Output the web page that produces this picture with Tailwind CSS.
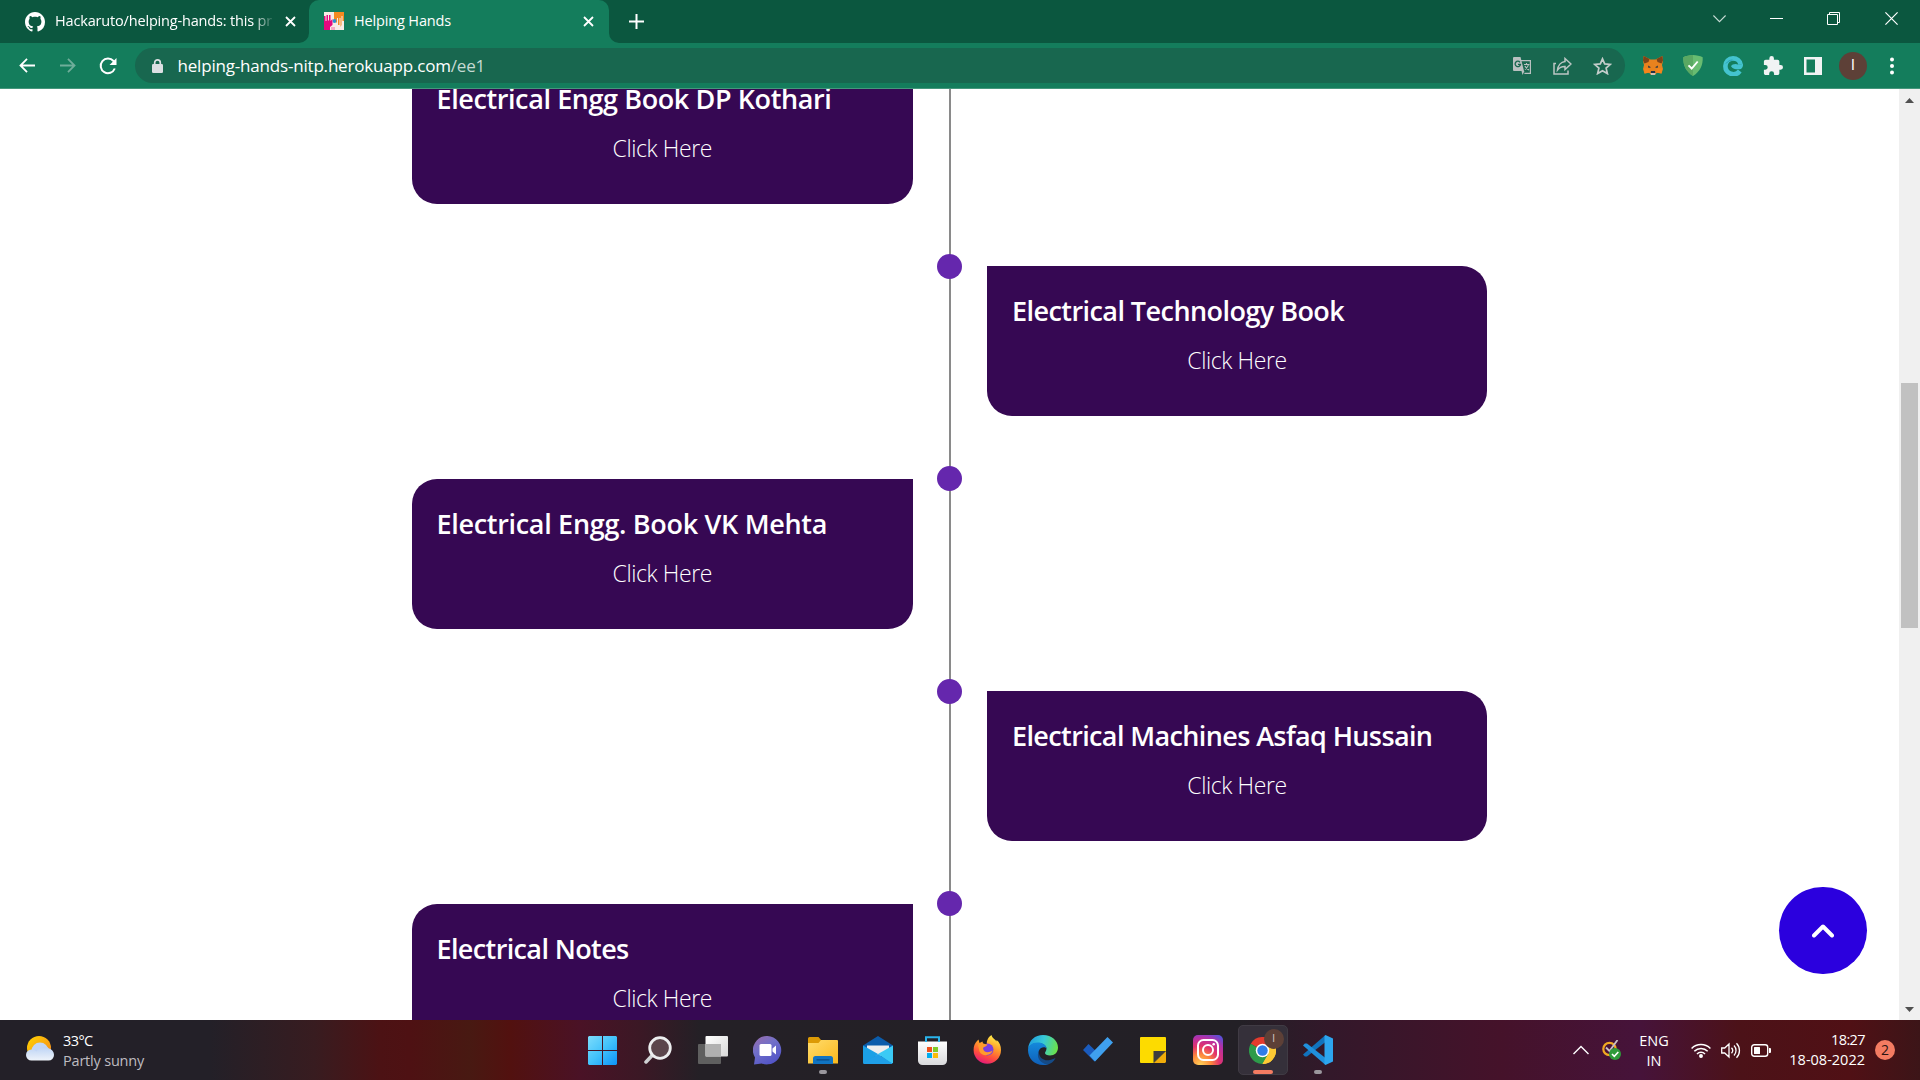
<!DOCTYPE html>
<html lang="en">
<head>
<meta charset="utf-8">
<title>Helping Hands</title>
<script src="https://cdn.jsdelivr.net/npm/@tailwindcss/browser@4"></script>
</head>
<body class="w-[1920px] h-[1080px] overflow-hidden flex flex-col bg-white font-['Open_Sans',sans-serif]">

<!-- Tab strip -->
<header class="flex h-[43px] shrink-0 bg-[#0b573f] text-white text-[14.5px]">
  <div class="flex items-center w-[309px] shrink-0 pl-[25px] pr-[12px] rounded-br-[10px]">
    <svg class="w-5 h-5 shrink-0" viewBox="0 0 16 16" fill="#fff"><path d="M8 0C3.58 0 0 3.58 0 8c0 3.54 2.29 6.53 5.47 7.59.4.07.55-.17.55-.38 0-.19-.01-.82-.01-1.49-2.01.37-2.53-.49-2.69-.94-.09-.23-.48-.94-.82-1.13-.28-.15-.68-.52-.01-.53.63-.01 1.08.58 1.23.82.72 1.21 1.87.87 2.33.66.07-.52.28-.87.51-1.07-1.78-.2-3.64-.89-3.64-3.95 0-.87.31-1.59.82-2.15-.08-.2-.36-1.02.08-2.12 0 0 .67-.21 2.2.82.64-.18 1.32-.27 2-.27s1.36.09 2 .27c1.53-1.04 2.2-.82 2.2-.82.44 1.1.16 1.92.08 2.12.51.56.82 1.27.82 2.15 0 3.07-1.87 3.75-3.65 3.95.29.25.54.73.54 1.48 0 1.07-.01 1.93-.01 2.2 0 .21.15.46.55.38A8.01 8.01 0 0 0 16 8c0-4.42-3.58-8-8-8z"/></svg>
    <div class="ml-[10px] w-[219px] overflow-hidden whitespace-nowrap tracking-[-0.17px] leading-5 -mt-[1px] [mask-image:linear-gradient(to_right,#000_198px,transparent_220px)]">Hackaruto/helping-hands: this pr</div>
    <svg class="ml-auto mr-[1px] w-[11px] h-[11px]" viewBox="0 0 11 11" stroke="#fff" stroke-width="1.8"><path d="M1 1l9 9M10 1l-9 9"/></svg>
  </div>
  <div class="relative flex items-center w-[300px] shrink-0 pl-[15px] pr-[15px] rounded-t-[10px] bg-[#147d5c]">
    <svg class="absolute -left-[10px] bottom-0 w-[10px] h-[10px]" viewBox="0 0 10 10" fill="#147d5c"><path d="M10 0v10H0A10 10 0 0 0 10 0z"/></svg>
    <svg class="absolute -right-[10px] bottom-0 w-[10px] h-[10px]" viewBox="0 0 10 10" fill="#147d5c"><path d="M0 0v10h10A10 10 0 0 1 0 0z"/></svg>
    <svg class="w-5 h-[18px] -mt-[2px]" viewBox="0 0 20 18"><path fill="#f8ece6" d="M0 0h20v18H0z"/><path fill="#f58a1f" d="M10 0h10v9h-1.500V4h-1v9l-1 2V6h-1v7h-1.500V6h-1v5L10 8z"/><path fill="#e5097f" d="M0 4h1.500v5h1V3H4v5.500h1V3h1.500v6l2-2v6L6 15v3H0z"/><circle cx="10.500" cy="9" r="1.900" fill="#2f8fd0"/><path fill="#f4a9c4" d="M7 15h4v3H7z"/></svg>
    <span class="ml-[10px] tracking-[-0.15px] leading-5 -mt-[1px]">Helping Hands</span>
    <svg class="ml-auto w-[11px] h-[11px]" viewBox="0 0 11 11" stroke="#fff" stroke-width="1.8"><path d="M1 1l9 9M10 1l-9 9"/></svg>
  </div>
  <svg class="ml-[19.5px] mt-[14px] w-[15px] h-[15px]" viewBox="0 0 15 15" stroke="#fff" stroke-width="2"><path d="M7.500 0v15M0 7.500h15"/></svg>
  <div class="ml-auto flex pt-3 pr-[22px]">
    <svg class="w-[13px] h-[13px]" viewBox="0 0 13 13" fill="none" stroke="#c8dcd5" stroke-width="1.100"><path d="M.4 3.500l6.100 6.100 6.100-6.100"/></svg>
    <svg class="ml-11 w-[13px] h-[13px]" viewBox="0 0 13 13" stroke="#fff"><path d="M0 6.500h13"/></svg>
    <svg class="ml-11 w-[13px] h-[13px]" viewBox="0 0 13 13" fill="none" stroke="#fff"><path d="M.5 2.500h10v10H.5zM2.500 2.500v-2h10v10h-2"/></svg>
    <svg class="ml-[45px] w-[13px] h-[13px]" viewBox="0 0 13 13" stroke="#fff" stroke-width="1.200"><path d="M.4.4l12.200 12.200M12.600.4L.4 12.600"/></svg>
  </div>
</header>

<!-- Toolbar -->
<nav class="flex items-center h-[46px] shrink-0 bg-[#147d5c] border-b border-[#45977c] pl-[19px]">
  <svg class="w-[17px] h-[15px]" viewBox="0 0 18 16" fill="none" stroke="#fff" stroke-width="1.900"><path d="M17 8H2M8.500 1L1.500 8l7 7"/></svg>
  <svg class="ml-[23px] w-[17px] h-[15px]" viewBox="0 0 18 16" fill="none" stroke="#6fae9a" stroke-width="1.900"><path d="M1 8h15M9.500 1l7 7-7 7"/></svg>
  <svg class="ml-[23px] w-[18px] h-[18px]" viewBox="0 0 18 18" fill="none" stroke="#fff" stroke-width="2"><path d="M15.800 11.500A7.300 7.300 0 1 1 14.500 4l1.500 1.700"/><path d="M17.500 1v7h-7z" fill="#fff" stroke="none"/></svg>
  <div class="ml-[18px] flex items-center w-[1490px] h-[35px] rounded-full bg-[#18674f] pl-[17px] pr-[13px]">
    <svg class="w-[11px] h-[14px] mt-[1px]" viewBox="0 0 11 14"><path d="M2.700 6V3.700a2.800 2.800 0 0 1 5.600 0V6" fill="none" stroke="#dcdfe3" stroke-width="1.700"/><rect y="5" width="11" height="9" rx="1.300" fill="#dcdfe3"/></svg>
    <span class="ml-[14.5px] text-[17px] leading-6 tracking-[-0.19px] text-white">helping-hands-nitp.herokuapp.com<span class="text-[#c5dad3]">/ee1</span></span>
    <svg class="ml-auto w-[19px] h-[18px]" viewBox="0 0 19 18"><path d="M8 3.600h9.400v12.800h-6" fill="none" stroke="#b9c0c0" stroke-width="1.200"/><path d="M1 0h6.500l3.500 14H1a1 1 0 0 1-1-1V1a1 1 0 0 1 1-1z" fill="#b9c0c0"/><path d="M8.500 14h3L9.500 18z" fill="#b9c0c0"/><path d="M7 5.300A2.700 2.700 0 1 0 7.500 7.400H5" fill="none" stroke="#18674f" stroke-width="1.300"/><path d="M11 7.500h5.500M13.500 6v1.500M15.500 7.500c-.5 2.500-2 4-3.500 5M12 9c.8 1.800 2 3 4 4" fill="none" stroke="#b9c0c0" stroke-width="1.100"/></svg>
    <svg class="ml-[21px] w-[19px] h-[18px]" viewBox="0 0 19 18" fill="none" stroke="#bcc6c4" stroke-width="1.500"><path d="M3 6.500H1V17h14v-3.500"/><path d="M12 1.500L18 7l-6 5.500V9.500C8.500 9.300 6.500 10.500 4.500 13 5 8.500 8 5 12 4.500z"/></svg>
    <svg class="ml-[21px] w-[19px] h-[18px]" viewBox="0 0 19 18" fill="none" stroke="#c3cdca" stroke-width="1.700"><path d="M9.500 1.800l2.200 5.100 5.600.5-4.200 3.700 1.300 5.500-4.900-2.900-4.900 2.900 1.300-5.500-4.200-3.700 5.600-.5z"/></svg>
  </div>
  <svg class="ml-[17.5px] w-5 h-[19px]" viewBox="0 0 20 19"><path fill="#e8821e" d="M.6 0L7.500 3.500h5L19.400 0 20 5l-1 4 1 4-1.500 4.500L14 16.500 12 19H8l-2-2.500-4.500 1L0 13l1-4-1-4z"/><path fill="#7d4319" d="M.6 0L6.500 3 5.500 6 1.500 7.500 0 4.500zM19.400 0l-5.900 3 1 3 4 1.500L20 4.500z"/><path fill="#f6851b" d="M1 12.500h5l1.500 4-6 1zM19 12.500h-5l-1.500 4 6 1z"/><path fill="#233447" d="M5 9.500l3 1.700-2.500.8zM15 9.500l-3 1.700 2.500.8zM8 15h4l.3 2H7.700z"/><path fill="#d5bfb2" d="M7.500 17h5L12 19H8z"/></svg>
  <svg class="ml-5 w-5 h-[21px]" viewBox="0 0 20 21"><path fill="#68bc71" d="M10 0c3.500.1 7 .9 9.700 2.200C20 10 17.500 16 10 21 2.500 16 0 10 .3 2.200 3 .9 6.500.1 10 0z"/><path fill="#5aa863" d="M10 0v21C2.500 16 0 10 .3 2.200 3 .9 6.500.1 10 0z"/><path d="M5.500 10.300l3.200 3.200 6-7" fill="none" stroke="#fff" stroke-width="1.900"/></svg>
  <svg class="ml-[20.5px] w-5 h-5" viewBox="0 0 20 20"><path fill="none" stroke="#44c3cf" stroke-width="4.600" d="M16.800 15A8 8 0 0 1 2.400 10C2.400 6 5.500 2.400 10 2.400c4 0 7 2.600 7.500 6"/><path fill="#44c3cf" d="M8 10.300c1-2.500 5-3 7-1.800L20 8c.2 3-1 5-3.500 5.300-3 .3-7-.3-8.500-3z"/><path d="M3 7.500c1.500-2 4-3.500 6.500-3.500" fill="none" stroke="#2a9fae" stroke-width="1"/></svg>
  <svg class="ml-[20px] w-5 h-5" viewBox="1 1 22 22" fill="#f1f3f4"><path d="M20.500 11H19V7c0-1.100-.9-2-2-2h-4V3.500a2.500 2.500 0 0 0-5 0V5H4c-1.100 0-2 .9-2 2v3.800h1.500a2.700 2.700 0 0 1 0 5.400H2V20c0 1.100.9 2 2 2h3.800v-1.500a2.700 2.700 0 0 1 5.400 0V22H17c1.100 0 2-.9 2-2v-4h1.500a2.500 2.500 0 0 0 0-5z"/></svg>
  <svg class="ml-[20.5px] w-[18px] h-[18px]" viewBox="0 0 18 18"><path fill="#f1f3f4" d="M0 0h18v18H0z"/><path fill="#147d5c" d="M2.500 2.500h8.500v13H2.500z"/></svg>
  <div class="ml-[17.5px] w-7 h-7 rounded-full bg-[#5d4037] text-white text-[14px] flex items-center justify-center font-['Roboto']">I</div>
  <svg class="ml-[23px] w-1 h-[18px]" viewBox="0 0 4 18" fill="#fff"><circle cx="2" cy="2.500" r="2"/><circle cx="2" cy="9" r="2"/><circle cx="2" cy="15.500" r="2"/></svg>
</nav>

<div class="flex h-[931px] shrink-0">
  <main class="relative w-[1899px] overflow-hidden">
    <div class="absolute left-[949px] top-0 w-[2px] h-full bg-[#8a8a8a]"></div>
    <div class="ml-[412px] -mt-[35px] w-[1075px] flex flex-col gap-[62.400px] text-white">
      <section class="relative self-start w-[500.500px] h-[150px] pt-[27px] px-[24.500px] rounded-[25px] rounded-tr-none bg-[#360853]">
        <h2 class="text-[27px] leading-9 font-semibold tracking-[-0.4px] whitespace-nowrap">Electrical Engg Book DP Kothari</h2>
        <p class="mt-[16px] text-center text-[23px] leading-[30px] font-light tracking-[-0.4px]">Click Here</p>
      </section>
      <section class="relative self-end w-[500px] h-[150px] pt-[27px] px-[25px] rounded-[25px] rounded-tl-none bg-[#360853]">
        <i class="absolute -left-[50px] -top-[12.500px] w-[25px] h-[25px] rounded-full bg-[#6527ad]"></i>
        <h2 class="text-[27px] leading-9 font-semibold tracking-[-0.56px] whitespace-nowrap">Electrical Technology Book</h2>
        <p class="mt-[16px] text-center text-[23px] leading-[30px] font-light tracking-[-0.4px]">Click Here</p>
      </section>
      <section class="relative self-start w-[500.500px] h-[150px] pt-[27px] px-[24.500px] rounded-[25px] rounded-tr-none bg-[#360853]">
        <i class="absolute left-[525px] -top-[12.500px] w-[25px] h-[25px] rounded-full bg-[#6527ad]"></i>
        <h2 class="text-[27px] leading-9 font-semibold tracking-[-0.31px] whitespace-nowrap">Electrical Engg. Book VK Mehta</h2>
        <p class="mt-[16px] text-center text-[23px] leading-[30px] font-light tracking-[-0.4px]">Click Here</p>
      </section>
      <section class="relative self-end w-[500px] h-[150px] pt-[27px] px-[25px] rounded-[25px] rounded-tl-none bg-[#360853]">
        <i class="absolute -left-[50px] -top-[12.500px] w-[25px] h-[25px] rounded-full bg-[#6527ad]"></i>
        <h2 class="text-[27px] leading-9 font-semibold tracking-[-0.62px] whitespace-nowrap">Electrical Machines Asfaq Hussain</h2>
        <p class="mt-[16px] text-center text-[23px] leading-[30px] font-light tracking-[-0.4px]">Click Here</p>
      </section>
      <section class="relative self-start w-[500.500px] h-[150px] pt-[27px] px-[24.500px] rounded-[25px] rounded-tr-none bg-[#360853]">
        <i class="absolute left-[525px] -top-[12.500px] w-[25px] h-[25px] rounded-full bg-[#6527ad]"></i>
        <h2 class="text-[27px] leading-9 font-semibold tracking-[-0.62px] whitespace-nowrap">Electrical Notes</h2>
        <p class="mt-[16px] text-center text-[23px] leading-[30px] font-light tracking-[-0.4px]">Click Here</p>
      </section>
    </div>
    <button class="absolute left-[1779px] top-[798px] w-[88px] h-[87px] rounded-full bg-[#2b00de] flex items-center justify-center">
      <svg class="w-[22px] h-[14px]" viewBox="0 0 22 14" fill="none" stroke="#fff" stroke-width="4" stroke-linecap="round" stroke-linejoin="round"><path d="M2 11.500l9-9 9 9"/></svg>
    </button>
  </main>
  <aside class="w-[21px] bg-[#f0f0f0] flex flex-col items-center">
    <svg class="mt-[9px] -ml-px w-[9px] h-[5px]" viewBox="0 0 9 5" fill="#505050"><path d="M4.500 0L9 5H0z"/></svg>
    <div class="mt-[280px] -ml-px w-[17px] h-[245px] bg-[#c1c1c1]"></div>
    <svg class="mt-auto mb-[8px] -ml-px w-[9px] h-[5px]" viewBox="0 0 9 5" fill="#505050"><path d="M4.500 5L9 0H0z"/></svg>
  </aside>
</div>

<!-- Taskbar -->
<footer class="flex items-center h-[60px] shrink-0 text-white text-[14.500px] leading-5 bg-[linear-gradient(90deg,#232028_0px,#232028_210px,#381c20_315px,#4c1214_380px,#4e1113_410px,#481912_470px,#52110f_510px,#4a1226_580px,#3b1825_640px,#242026_700px,#232026_1240px,#33182a_1330px,#45122a_1500px,#46133a_1640px,#4c1218_1740px,#501015_1850px,#3c1518_1920px)]">
  <div class="flex items-center w-[575px] shrink-0 pl-[26px]">
    <svg class="w-7 h-[25px] -mt-[3px]" viewBox="0 0 28 25"><defs><linearGradient id="sun" x1="0" y1="0" x2="1" y2="1"><stop stop-color="#ffd500"/><stop offset="1" stop-color="#f58220"/></linearGradient><linearGradient id="cl" x1="0" y1="0" x2="0" y2="1"><stop stop-color="#bcd3f5"/><stop offset="1" stop-color="#eef3fa"/></linearGradient></defs><circle cx="13" cy="12" r="12" fill="url(#sun)"/><circle cx="14" cy="15" r="8.500" fill="#c2d6f6"/><path d="M5.500 24.500a5.500 5.500 0 0 1 0-11c2 0 3 .3 5 2 2-3 8-7 12.500-3 4 1.500 5 4 5 6.500a5.500 5.500 0 0 1-5.500 5.500z" fill="url(#cl)"/></svg>
    <div class="ml-[9px] mt-[1px]"><p class="tracking-[-0.6px]">33°C</p><p class="text-[#bfbcc1] tracking-[-0.2px]">Partly sunny</p></div>
  </div>
  <div class="flex items-center shrink-0">
    <div class="w-[55px] flex justify-center"><svg class="w-[29px] h-[29px]" viewBox="0 0 29 29"><defs><linearGradient id="win" gradientUnits="userSpaceOnUse" x1="0" y1="0" x2="29" y2="29"><stop stop-color="#7ddcfb"/><stop offset=".5" stop-color="#42c2fb"/><stop offset="1" stop-color="#0d93f8"/></linearGradient></defs><path fill="url(#win)" d="M1 0h13v14H0V1zM15 0h13l1 1v13H15zM0 15h14v14H1l-1-1zM15 15h14v13l-1 1H15z"/></svg></div>
    <div class="w-[55px] flex justify-center"><svg class="w-7 h-7" viewBox="0 0 28 28"><path d="M2 26l7.500-8" stroke="#cfd1d3" stroke-width="3.500" stroke-linecap="round"/><circle cx="16" cy="12" r="10.300" fill="#5b464c" stroke="#eceeef" stroke-width="2.800"/></svg></div>
    <div class="w-[55px] flex justify-center"><svg class="w-[30px] h-7" viewBox="0 0 30 28"><defs><linearGradient id="tv" x1="0" y1="0" x2="1" y2="1"><stop stop-color="#fff"/><stop offset="1" stop-color="#d8d8d8"/></linearGradient></defs><rect y="8" width="23" height="20" rx="1" fill="#5f5f5f"/><rect x="7.500" width="22.500" height="20.500" rx="1" fill="url(#tv)"/><path d="M7.500 8H23v12.500H7.500z" fill="#b0b0b0"/></svg></div>
    <div class="w-[55px] flex justify-center"><svg class="w-[29px] h-[29px]" viewBox="0 0 29 29"><defs><linearGradient id="ch" x1="0" y1="0" x2=".6" y2="1"><stop stop-color="#9b6aa8"/><stop offset=".45" stop-color="#7270c8"/><stop offset="1" stop-color="#5355c8"/></linearGradient></defs><path fill="url(#ch)" d="M14.500 0a14.200 14.200 0 1 1-5.700 27.400L1 28.500l1-7A14.200 14.200 0 0 1 14.500 0z"/><rect x="6.500" y="8" width="12" height="12" rx="1.500" fill="#fff"/><path d="M19.500 12.500L23 9.500v9l-3.500-3z" fill="#fff"/></svg></div>
    <div class="relative w-[55px] flex justify-center"><svg class="w-[30px] h-[27px]" viewBox="0 0 30 27"><defs><linearGradient id="fo" x1="0" y1="0" x2="1" y2="1"><stop stop-color="#ffdc6c"/><stop offset="1" stop-color="#fbb91d"/></linearGradient></defs><path fill="#dc9a06" d="M0 1.500A1.500 1.500 0 0 1 1.500 0h9L13 3v4H0z"/><path fill="url(#fo)" d="M0 6h10.500L13 3h16a1 1 0 0 1 1 1v22.500H0z"/><path fill="#1174c2" d="M5 21.500a2.500 2.500 0 0 1 2.500-2.500h15a2.500 2.500 0 0 1 2.500 2.500V27H5z"/><path d="M9 22.800h12" stroke="#0a4a86" stroke-width="1.300" stroke-linecap="round"/></svg><span class="absolute left-[24px] top-[33px] w-2 h-1 rounded-full bg-[#9a979d]"></span></div>
    <div class="w-[55px] flex justify-center"><svg class="w-[30px] h-7" viewBox="0 0 30 28"><path fill="#0b5cab" d="M15 0l15 9.500v4H0v-4z"/><path fill="#eeeeee" d="M4 9.500h22V14l-11 8L4 14z"/><path fill="#1ba0e6" d="M0 9.500L15 18l-12 10H1.500A1.500 1.500 0 0 1 0 26.500z"/><path fill="#3bcaf5" d="M30 9.500v17l-1.500 1.500L15 18z"/><path fill="#1f9fe8" d="M15 18l14.500 9.500-1 .5H1.500l-1-.5z"/></svg></div>
    <div class="w-[55px] flex justify-center"><svg class="w-[29px] h-[29px]" viewBox="0 0 29 29"><defs><linearGradient id="st" x1="0" y1="0" x2="0" y2="1"><stop stop-color="#fff"/><stop offset="1" stop-color="#d9d9dc"/></linearGradient></defs><path fill="url(#st)" d="M0 5.500h29v19A4.500 4.500 0 0 1 24.500 29h-20A4.500 4.500 0 0 1 0 24.500z"/><path d="M8 6V1.300h13V6" fill="none" stroke="#2ab4ec" stroke-width="2"/><path fill="#f1511b" d="M9 11h5v5H9z"/><path fill="#80cc28" d="M15 11h5v5h-5z"/><path fill="#00adef" d="M9 17h5v5H9z"/><path fill="#fbbc09" d="M15 17h5v5h-5z"/></svg></div>
    <div class="w-[55px] flex justify-center"><svg class="w-[29px] h-[29px] -mt-px" viewBox="0 0 29 29"><defs><linearGradient id="ff" x1=".7" y1="0" x2=".3" y2="1"><stop stop-color="#fff04a"/><stop offset=".4" stop-color="#ff9a2a"/><stop offset=".7" stop-color="#ff4f3d"/><stop offset="1" stop-color="#e3157e"/></linearGradient></defs><path fill="url(#ff)" d="M5.500 4.500l1 3.500 3-1.500.5 2 4 1c-1-4 2-8 4.500-9.500C19 3 22 4 23.500 6.500V5c3 2 4.500 6 4.500 10a13.700 13.700 0 1 1-27.400 0C.5 11 2 8 4 6z"/><circle cx="14.500" cy="14.500" r="6" fill="#7a3fe0"/><path fill="#ff9b2c" d="M5 10c3-3 6-1 9.500-.5-1 2-3 2-4.500 3.500.5 5 6 5 9.500 2.500-1 5-10 7-13 1z"/></svg></div>
    <div class="w-[55px] flex justify-center"><svg class="w-[30px] h-[30px]" viewBox="0 0 30 30"><defs><linearGradient id="ed" x1="0" y1=".3" x2="1" y2=".5"><stop stop-color="#1f9de0"/><stop offset=".5" stop-color="#38c9d6"/><stop offset="1" stop-color="#6be04a"/></linearGradient><linearGradient id="ee" x1="0" y1="0" x2="0" y2="1"><stop stop-color="#1489dc"/><stop offset="1" stop-color="#0f5fb8"/></linearGradient></defs><path fill="url(#ed)" d="M0 14C1 5 7 0 15 0c9 0 15 6 15 12.500 0 5-3.500 8-8 8-3 0-5-1-5-2.500 0-1 1.500-2 1.500-4.500C18.500 11 15 8 10 8 5 8 1 11 0 14z"/><path fill="url(#ee)" d="M0 15c0-4 4-7.500 9.500-7.500 5 0 9 2.500 9 6-1.500-2-6-1.500-7.500 2-2 5 2 12 9 14.200-1.500.3-3 .3-5 .3C6.500 30 0 23.500 0 15z"/><path fill="#154a86" d="M11 15.500c-1 7 5 11 11 9.500 2.500-.5 4-1.500 5.500-2C26 26.500 22.500 29 19.500 29.700 11 28 8 21 11 15.500z"/></svg></div>
    <div class="w-[55px] flex justify-center"><svg class="w-[30px] h-[25px] -mt-px" viewBox="0 0 30 25"><path fill="#1a5bbd" d="M5.500 7L0 13l11.500 11.500 6-6z"/><path fill="#3fa0ee" d="M24.500 0L30 5.500 12 24.500l-5.500-6z"/></svg></div>
    <div class="w-[55px] flex justify-center"><svg class="w-[26px] h-[26px]" viewBox="0 0 26 26"><path fill="#fddb00" d="M0 1a1 1 0 0 1 1-1h24a1 1 0 0 1 1 1v13L14 26H1a1 1 0 0 1-1-1z"/><path fill="#f0ac0a" d="M26 14v11l-1 1H14z"/><path fill="#3d3d3d" d="M13.500 14H26L13.500 26z"/></svg></div>
    <div class="w-[55px] flex justify-center"><svg class="w-[30px] h-[30px]" viewBox="0 0 30 30"><defs><radialGradient id="ig" cx=".25" cy="1" r="1.150"><stop stop-color="#ffd25a"/><stop offset=".3" stop-color="#fd8a3a"/><stop offset=".55" stop-color="#e2336b"/><stop offset=".8" stop-color="#b530a8"/><stop offset="1" stop-color="#5b4fd6"/></radialGradient></defs><rect width="30" height="30" rx="5" fill="url(#ig)"/><rect x="5" y="5" width="20" height="20" rx="5.500" fill="none" stroke="#fff" stroke-width="2"/><circle cx="15" cy="15" r="5" fill="none" stroke="#fff" stroke-width="2"/><circle cx="20.700" cy="9.300" r="1.300" fill="#fff"/></svg></div>
    <div class="w-[55px] flex justify-center">
      <div class="relative w-[50px] h-[50px] rounded-[5px] bg-[#35303a] border border-[#403b44] flex items-center justify-center">
        <svg class="w-[27px] h-[27px]" viewBox="0 0 48 48"><path fill="#e33b2e" d="M24 24L3.200 12A24 24 0 0 1 44.800 12z"/><path fill="#fcc934" d="M24 24l20.800-12A24 24 0 0 1 24 48l-2-5z"/><path fill="#2d9b4a" d="M3.200 12A24 24 0 0 0 24 48l10.400-18L24 24z"/><path fill="#fcc934" d="M44.800 12A24 24 0 0 1 24 48l10.400-18L36 12z"/><path fill="#e33b2e" d="M24 12h20.800L42 10 24 4z"/><circle cx="24" cy="24" r="12" fill="#fff"/><circle cx="24" cy="24" r="9.300" fill="#2f7de9"/></svg>
        <span class="absolute left-[25px] top-[3px] w-5 h-5 rounded-full bg-[#5d4037] text-[#cfc4bf] text-[10px] flex items-center justify-center font-['Roboto']">I</span>
        <span class="absolute left-[14px] top-[44px] w-5 h-1 rounded-full bg-[#f47c62]"></span>
      </div>
    </div>
    <div class="relative w-[55px] flex justify-center"><svg class="w-[30px] h-[30px]" viewBox="0 0 30 30"><path fill="#1173bd" d="M0 19.500l1.800 2L4 21.500 22.500 7V0z"/><path fill="#2090dc" d="M0 10.500l1.800-2L4 8.500 22.500 23v7z"/><path fill="#2da5ee" d="M22.500 0L30 3.500v23L22.500 30l-1-1V1z"/></svg><span class="absolute left-[24px] top-[35px] w-2 h-1 rounded-full bg-[#9a979d]"></span></div>
  </div>
  <div class="ml-auto flex items-center pr-[25px]">
    <svg class="w-4 h-[10px]" viewBox="0 0 16 10" fill="none" stroke="#fff" stroke-width="1.400"><path d="M.5 9L8 1.500 15.500 9"/></svg>
    <svg class="ml-[13px] w-[19px] h-5" viewBox="0 0 19 20"><circle cx="7.500" cy="9" r="6.200" fill="none" stroke="#f0a922" stroke-width="2.200"/><path d="M4 7.500l3.500 3.500L15.500 0" fill="none" stroke="#c9bfc4" stroke-width="1.800"/><circle cx="13" cy="14" r="6" fill="#2e9a3a"/><path d="M10 14l2.300 2.300 4-4.300" fill="none" stroke="#fff" stroke-width="1.600"/></svg>
    <div class="ml-[17px] w-[32px] text-center mt-[1px]"><p>ENG</p><p>IN</p></div>
    <svg class="ml-[21px] w-5 h-[15px]" viewBox="0 0 20 15" fill="none" stroke="#fff" stroke-width="1.500"><path d="M.6 5.500a13.200 13.200 0 0 1 18.800 0M3.300 8.300a9.400 9.400 0 0 1 13.400 0M6 11a5.600 5.600 0 0 1 8 0"/><circle cx="10" cy="13" r="1.200" fill="#fff"/></svg>
    <svg class="ml-[10px] w-5 h-[17px]" viewBox="0 0 20 17" fill="none" stroke="#fff" stroke-width="1.300"><path d="M.7 6v5h3L8 15V2L3.700 6zM10.500 5.800a4 4 0 0 1 0 5.400M13 3.500a7.200 7.200 0 0 1 0 10M15.500 1.200a10.500 10.500 0 0 1 0 14.600"/></svg>
    <svg class="ml-[10px] w-5 h-[13px]" viewBox="0 0 20 13"><rect x=".7" y=".7" width="16" height="11.600" rx="2.500" fill="none" stroke="#fff" stroke-width="1.400"/><rect x="3" y="3" width="6" height="7" rx=".5" fill="#fff"/><path d="M18 4h1a1 1 0 0 1 1 1v3a1 1 0 0 1-1 1h-1z" fill="#fff"/></svg>
    <div class="ml-[10px] w-[84px] text-right -mt-[1px]"><p class="tracking-[-0.6px]">18:27</p><p>18-08-2022</p></div>
    <div class="ml-[10px] w-5 h-5 rounded-full bg-[#f47c62] text-[#2a1512] text-[14px] leading-5 text-center">2</div>
  </div>
</footer>
</body>
</html>
